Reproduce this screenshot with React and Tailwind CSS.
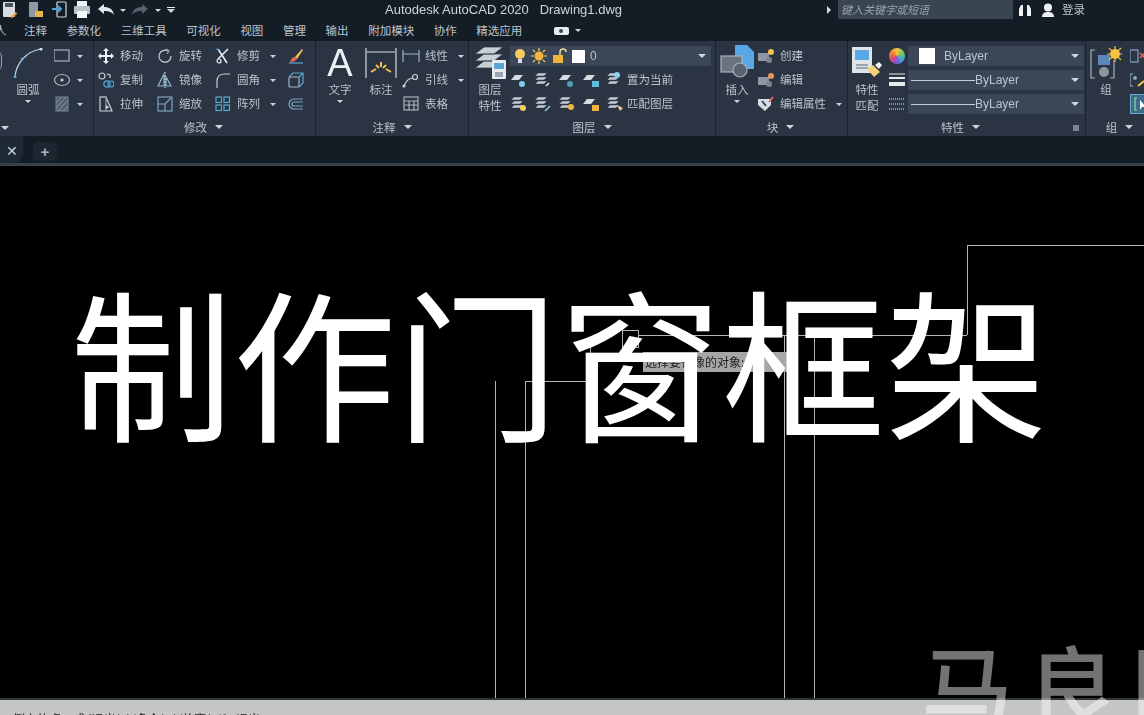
const S = ({ children, w = 16, h = 16, vb }) => (
  <svg width={w} height={h} viewBox={vb || `0 0 ${w} ${h}`} fill="none" stroke="#c9d1d9" strokeWidth="1.2" className="shrink-0">
    {children}
  </svg>
);

const Caret = ({ big, className = '' }) => (
  <span className={`inline-block w-0 h-0 border-x-transparent border-t-[#cfd6dd] ${big ? 'border-x-[4px] border-t-[4px]' : 'border-x-[3px] border-t-[3px]'} ${className}`} />
);

// quick access toolbar
const SaveAs = () => <S w={18} h={18}><rect x="2" y="1" width="12" height="15" rx="1" fill="#d8dde2" stroke="none" /><rect x="4" y="2" width="8" height="4" fill="#4a5562" stroke="none" /><path d="M9 16l6-5 1 2-5 4z" fill="#e8a33c" stroke="none" /></S>;
const OpenFile = () => <S w={18} h={18}><rect x="3" y="1" width="9" height="15" fill="#8f98a3" stroke="none" /><rect x="9" y="10" width="8" height="6" fill="#e9b44c" stroke="none" /></S>;
const Import = () => <S w={18} h={18}><rect x="6" y="1" width="9" height="15" rx="1" stroke="#d5dbe0" /><path d="M1 8h9M7 5l3 3-3 3" stroke="#4fa3dc" strokeWidth="1.8" /></S>;
const PrintI = () => <S w={18} h={18}><rect x="4" y="0" width="10" height="6" fill="#eef1f4" stroke="none" /><rect x="1" y="5" width="16" height="8" rx="1" fill="#b9c2cb" stroke="none" /><rect x="4" y="10" width="10" height="7" fill="#f5f7f9" stroke="none" /></S>;
const Undo = ({ c = '#e4e8ec' }) => <S w={18} h={14}><path d="M1 6l6-5v3c5 0 9 2 10 8-2-3-5-4-10-4v3z" fill={c} stroke="none" /></S>;
const Redo = () => <S w={18} h={14}><path d="M17 6l-6-5v3C6 4 2 6 1 12c2-3 5-4 10-4v3z" fill="#56606c" stroke="none" /></S>;

// modify panel
const Move = () => <S><path d="M8 1v14M1 8h14" strokeWidth="2" stroke="#eef1f4" /><path d="M8 0l3 3H5zM8 16l3-3H5zM0 8l3 3V5zM16 8l-3 3V5z" fill="#eef1f4" stroke="none" /></S>;
const Rotate = () => <S><path d="M11 3a6 6 0 1 0 3 5" /><path d="M9 1l3 2-2 3" stroke="#9aa5b0" /></S>;
const Trim = () => <S><path d="M3 1l9 14M13 1L3 11" strokeWidth="1.5" stroke="#eef1f4" /><circle cx="4" cy="13" r="2" stroke="#eef1f4" /><path d="M1 1l4 1" stroke="#5aa7d6" /></S>;
const Brush = () => <S><path d="M14 1L7 9l2 2 6-9z" fill="#f2c14e" stroke="none" /><path d="M7 9c-3 0-4 2-5 5 3 0 6-1 7-3z" fill="#e4665a" stroke="none" /><path d="M1 15h14" stroke="#5aa7d6" /></S>;
const Copy = () => <S><circle cx="4" cy="4" r="3" /><circle cx="9" cy="12" r="3.2" stroke="#5aa7d6" /><circle cx="13" cy="12" r="3" stroke="#5aa7d6" /><path d="M9 2l3 1v3" /></S>;
const Mirror = () => <S><path d="M7 2L1 14h6zM9 5l5 9H9z" stroke="#8fb6d2" /><path d="M8 0v16" strokeDasharray="2 1" /></S>;
const Fillet = () => <S><path d="M2 16V9c0-5 3-7 8-7h5" /></S>;
const Cube = () => <S><rect x="1" y="5" width="10" height="10" rx="1" stroke="#9fb4c6" /><path d="M1 5l4-4h10v10l-4 4M11 5l4-4" stroke="#5aa7d6" /></S>;
const Stretch = () => <S><path d="M2 1h6l6 14H2z" /><path d="M2 1h6v14" stroke="#9aa5b0" /><circle cx="9" cy="11" r="1" fill="#eef1f4" /></S>;
const Scale = () => <S><rect x="1" y="1" width="14" height="14" stroke="#7fa6c4" /><path d="M1 8h7v7M8 8l6-6" stroke="#7fa6c4" /></S>;
const ArrayI = () => <S><g stroke="#5aa7d6"><rect x="1" y="1" width="5.5" height="5.5" /><rect x="9" y="1" width="5.5" height="5.5" /><rect x="1" y="9" width="5.5" height="5.5" /><rect x="9" y="9" width="5.5" height="5.5" /></g></S>;
const Offset = () => <S><path d="M15 3H6a5 5 0 0 0 0 10h9M15 6H6a2 2 0 0 0 0 4h9" stroke="#7fa6c4" /></S>;

// annotation panel
const Linear = () => <S w={18} h={16}><path d="M1 2v12M17 2v12M1 6h16" stroke="#9fb4c6" /></S>;
const Leader = () => <S w={18} h={16}><path d="M2 14c2-5 5-8 9-8" /><circle cx="13" cy="5" r="2.5" /><circle cx="2" cy="14" r="1" fill="#fff" /></S>;
const Table = () => <S w={18} h={16}><rect x="2" y="1" width="14" height="13" stroke="#aab4be" /><path d="M2 5h14M2 9h14M7 5v9M12 5v9" stroke="#aab4be" /></S>;

// layer panel
const Bulb = ({ c = '#f5cd5b' }) => <S w={14} h={16}><circle cx="7" cy="6" r="5" fill={c} stroke="none" /><rect x="5" y="11" width="4" height="4" fill="#d9dee3" stroke="none" /></S>;
const Sun = () => <S><circle cx="8" cy="8" r="4.5" fill="#f5b53c" stroke="none" /><path d="M8 0v3M8 13v3M0 8h3M13 8h3M2 2l2 2M12 12l2 2M14 2l-2 2M4 12l-2 2" stroke="#f5cd5b" /></S>;
const Lock = ({ c = '#f0b43a' }) => <S><rect x="2" y="7" width="10" height="8" fill={c} stroke="none" /><path d="M9 7V4a3 3 0 0 1 6 0" stroke="#e6d9a8" strokeWidth="1.5" /></S>;
const Sheet = ({ children }) => (
  <S w={18} h={16}>
    <path d="M5 3h8l-4 5H1z" fill="#d5dbe0" stroke="none" />
    {children}
  </S>
);
const Stack = ({ children }) => (
  <S w={18} h={16}>
    <path d="M4 1h9l-3 3H1zM4 5h9l-3 3H1zM4 9h9l-3 3H1z" fill="#c3ccd5" stroke="#2a3442" strokeWidth="0.5" />
    {children}
  </S>
);
const LayerBig = () => (
  <S w={32} h={34}>
    <path d="M10 1h19l-9 7H1zM10 8h19l-9 7H1zM10 15h19l-9 7H1z" fill="#c8cfd6" stroke="#2a3442" strokeWidth="0.7" />
    <rect x="18" y="14" width="14" height="19" rx="1" fill="#e8ecef" stroke="none" />
    <rect x="20" y="17" width="10" height="6" fill="#5aa7d6" stroke="none" />
    <rect x="21" y="26" width="8" height="5" fill="#9aa5b0" stroke="none" />
  </S>
);

// block panel
const InsertBig = () => (
  <S w={34} h={36}>
    <path d="M15 0h12l7 7v17H15z" fill="#5aa7e6" stroke="none" />
    <rect x="1" y="11" width="21" height="16" fill="#6a7480" stroke="#aab4be" />
    <circle cx="20" cy="25" r="7" fill="#59636f" stroke="#aab4be" />
  </S>
);
const BlockI = ({ c = '#f2c14e' }) => <S w={18} h={16}><rect x="1" y="5" width="11" height="8" fill="#8c97a3" stroke="none" /><circle cx="12" cy="12" r="3" fill="#7b8591" stroke="none" /><circle cx="14" cy="4" r="3" fill={c} stroke="none" /></S>;
const Attr = () => <S w={18} h={16}><path d="M1 3h13v6l-6 6-7-6z" fill="#d5dbe0" stroke="none" /><path d="M5 5l4 5" stroke="#2a3442" strokeWidth="1.6" /><path d="M12 6l4-5" stroke="#e4665a" strokeWidth="2" /></S>;

// properties panel
const MatchBig = () => (
  <S w={32} h={32}>
    <rect x="1" y="0" width="20" height="26" fill="#dfe4e8" stroke="none" />
    <rect x="4" y="3" width="14" height="10" fill="#5aa7e6" stroke="none" />
    <path d="M5 18h12M5 21h12" stroke="#5b6672" />
    <path d="M16 22l6-4 7 7-6 5z" fill="#f5d27a" stroke="none" />
    <path d="M24 18l4-3 3 3-3 4z" fill="#eef1f4" stroke="none" />
  </S>
);
const Wheel = () => (
  <span className="w-4 h-4 rounded-full shrink-0 bg-[conic-gradient(#f5c542,#7ec850,#3fa7d6,#7a5bd6,#e0457b,#ef7f2c,#f5c542)]" />
);
const Weights = () => <S><path d="M0 2h16" strokeWidth="1" stroke="#e8ecef" /><path d="M0 6h16" strokeWidth="2" stroke="#e8ecef" /><path d="M0 12h16" strokeWidth="4" stroke="#e8ecef" /></S>;
const Pattern = () => <S><path d="M0 3h16M0 8h16M0 13h16" strokeDasharray="1 1" stroke="#8c97a3" strokeWidth="2" /></S>;

const GroupBig = () => (
  <S w={32} h={34}>
    <path d="M5 4H1v28h4M24 14v18h-4" stroke="#aab4be" />
    <rect x="8" y="9" width="12" height="10" fill="#5a87b8" stroke="none" />
    <circle cx="14" cy="26" r="5" fill="#8c97a3" stroke="none" />
    <circle cx="25" cy="8" r="5" fill="#f5c542" stroke="none" />
    <path d="M25 0v16M17 8h15M19 2l12 12M31 2L19 14" stroke="#f5c542" />
  </S>
);

const Tool = ({ icon, label, caret, capPos = 'ml-[4px]' }) => (
  <div className="flex items-center h-6 gap-[6px]">
    <span className="w-4 flex justify-center">{icon}</span>
    {label && <span className="text-[11.5px] whitespace-nowrap">{label}</span>}
    {caret && <Caret className={capPos} />}
  </div>
);

const Panel = ({ w, title, caret = true, children, extra, titleClass = '' }) => (
  <section className={`${w} shrink-0 border-r border-[#1a232e] flex flex-col relative`}>
    <div className="h-[80px] flex pt-[3px]">{children}</div>
    <div className={`flex-1 flex items-center justify-center gap-2 text-[11.5px] ${titleClass}`}>
      {title}
      {caret && <Caret big />}
    </div>
    {extra}
  </section>
);

const Big = ({ icon, lines, caret, className = '' }) => (
  <div className={`flex flex-col items-center ${className}`}>
    <div className="h-[37px] flex items-center">{icon}</div>
    <div className="text-[11.5px] leading-[16px] text-center">
      {lines.map((l) => <div key={l}>{l}</div>)}
    </div>
    {caret && <Caret className="mt-[3px]" />}
  </div>
);

const Select = ({ children, className = '' }) => (
  <div className={`h-[20px] bg-[#3b4759] flex items-center pr-[5px] ${className}`}>
    {children}
    <Caret big className="ml-auto" />
  </div>
);

const menus = ['注释', '参数化', '三维工具', '可视化', '视图', '管理', '输出', '附加模块', '协作', '精选应用'];

const RibbonIcons = ({ items, label }) => (
  <div className="flex items-center h-6 gap-[4px]">
    {items.map((it, i) => <span key={i} className="w-[18px] mr-[2px] flex justify-center">{it}</span>)}
    <span className="text-[11.5px] -ml-[3px] whitespace-nowrap">{label}</span>
  </div>
);

export default function App() {
  return (
    <div className="w-[1144px] h-[715px] overflow-hidden relative bg-black flex flex-col font-['Noto_Sans_CJK_SC',sans-serif] text-[#bcc4cc]">
      <div className="shrink-0 blur-[0.5px]">
        {/* title bar */}
        <header className="h-[20px] bg-[#141c26] flex items-center relative">
          <div className="flex items-center pl-[1px]">
            <SaveAs />
            <span className="ml-[7px]"><OpenFile /></span>
            <span className="ml-[7px]"><Import /></span>
            <span className="ml-[4px]"><PrintI /></span>
            <span className="ml-[6px]"><Undo /></span>
            <Caret className="ml-[5px]" />
            <span className="ml-[5px]"><Redo /></span>
            <Caret className="ml-[6px]" />
            <div className="ml-[6px] flex flex-col items-center gap-[1px]">
              <span className="w-2 h-[1px] bg-[#e4e8ec]" />
              <Caret big />
            </div>
          </div>
          <div className="ml-[210px] font-['Liberation_Sans',sans-serif] text-[13px] whitespace-pre text-[#cfd4da]">
            Autodesk AutoCAD 2020   Drawing1.dwg
          </div>
          <span className="ml-[205px] w-0 h-0 border-y-[4px] border-y-transparent border-l-[4px] border-l-[#d8dde2]" />
          <div className="ml-[7px] w-[175px] h-[19px] -mt-[1px] bg-[#3a4552] text-[11px] italic text-[#9aa5b0] pl-[3px] flex items-center">
            键入关键字或短语
          </div>
          <div className="ml-[5px] flex items-center">
            <S w={14} h={14}><path d="M1 13V6l2-4h2v11zM13 13V6l-2-4H9v11z" fill="#eef1f4" stroke="none" /></S>
            <span className="ml-[9px]">
              <S w={14} h={14}><circle cx="7" cy="4.5" r="4" fill="#eef1f4" stroke="none" /><path d="M1 14c0-4 3-5 6-5s6 1 6 5z" fill="#eef1f4" stroke="none" /></S>
            </span>
            <span className="ml-[7px] text-[11.5px]">登录</span>
          </div>
        </header>
        {/* menu tabs */}
        <nav className="h-[21px] bg-[#141c26] flex items-center pl-[24px] gap-[19.6px] text-[11.5px] relative">
          <span className="absolute left-[-5px] top-[2px]">人</span>
          {menus.map((m) => <span key={m} className="whitespace-nowrap">{m}</span>)}
          <span className="ml-[12px] flex items-center gap-[6px]">
            <span className="w-[15px] h-[8px] rounded-[2px] bg-[#e8ecef] flex items-center justify-center">
              <span className="w-[4px] h-[4px] rounded-full bg-[#3a4552]" />
            </span>
            <Caret />
          </span>
        </nav>
        {/* ribbon */}
        <div className="h-[95px] bg-[#2a3442] flex">
          <Panel w="w-[94px]" title={null} extra={<Caret big className="absolute left-[1px] bottom-[6px]" />} caret={false}>
            <span className="absolute left-[-12px] top-[9px] w-[14px] h-[22px] rounded-full border border-[#9aa5b0]" />
            <Big className="ml-[13px] w-[30px]" lines={['圆弧']} caret icon={
              <S w={30} h={30}><path d="M2 29C3 15 14 3 28 1" stroke="#b9d0e2" /><circle cx="2" cy="29" r="1.5" fill="#5aa7d6" stroke="none" /><circle cx="28" cy="1" r="1.5" fill="#dfe4e8" stroke="none" /><circle cx="9" cy="11" r="1.5" fill="#5aa7d6" stroke="none" /></S>
            } />
            <div className="ml-[11px] flex flex-col">
              <Tool icon={<S><rect x="0" y="2" width="15" height="11" stroke="#aab4be" /></S>} caret capPos="ml-[1px]" />
              <Tool icon={<S><ellipse cx="8" cy="8" rx="7.5" ry="5.5" stroke="#aab4be" /><circle cx="8" cy="8" r="1" fill="#aab4be" /></S>} caret capPos="ml-[1px]" />
              <Tool icon={<S><rect x="2" y="1" width="12" height="14" fill="#56606c" stroke="#6f7b88" /><path d="M2 7l6-6M2 12l10-11M4 15l10-11M9 15l5-5" stroke="#7fa6c4" strokeWidth="0.8" /></S>} caret capPos="ml-[1px]" />
            </div>
          </Panel>

          <Panel w="w-[222px]" title="修改" titleClass="pr-[2px]">
            <div className="ml-[4px] w-[59px]">
              <Tool icon={<Move />} label="移动" />
              <Tool icon={<Copy />} label="复制" />
              <Tool icon={<Stretch />} label="拉伸" />
            </div>
            <div className="w-[58px]">
              <Tool icon={<Rotate />} label="旋转" />
              <Tool icon={<Mirror />} label="镜像" />
              <Tool icon={<Scale />} label="缩放" />
            </div>
            <div className="w-[73px]">
              <Tool icon={<Trim />} label="修剪" caret />
              <Tool icon={<Fillet />} label="圆角" caret />
              <Tool icon={<ArrayI />} label="阵列" caret />
            </div>
            <div>
              <Tool icon={<Brush />} />
              <Tool icon={<Cube />} />
              <Tool icon={<Offset />} />
            </div>
          </Panel>

          <Panel w="w-[153px]" title="注释">
            <Big className="ml-[12px] w-[24px]" lines={['文字']} caret icon={
              <span className="font-['Liberation_Sans',sans-serif] text-[38px] leading-none text-[#eef1f4]">A</span>
            } />
            <Big className="ml-[13px] w-[32px]" lines={['标注']} icon={
              <S w={32} h={32}><path d="M1 1v30M31 1v30M2 5h28" stroke="#d5dbe0" /><path d="M6 25l5-3M11 18l3 3M16 15v5M21 18l-3 3M26 25l-5-3" stroke="#f2c14e" strokeWidth="2" /></S>
            } />
            <div className="ml-[6px]">
              <Tool icon={<Linear />} label="线性" caret />
              <Tool icon={<Leader />} label="引线" caret />
              <Tool icon={<Table />} label="表格" />
            </div>
          </Panel>

          <Panel w="w-[247px]" title="图层">
            <Big className="ml-[5px] w-[32px]" lines={['图层', '特性']} icon={<LayerBig />} />
            <div className="ml-[4px] flex flex-col">
              <Select className="w-[201px] mt-[2px] mb-[2px] pl-[3px] gap-[4px]">
                <Bulb /><Sun /><Lock />
                <span className="w-[13px] h-[13px] bg-white ml-[1px]" />
                <span className="ml-[1px] text-[12px] font-['Liberation_Sans',sans-serif]">0</span>
              </Select>
              <RibbonIcons label="置为当前" items={[
                <Sheet key="a"><circle cx="12" cy="12" r="3" fill="#7fd0e8" stroke="none" /></Sheet>,
                <Stack key="b"><path d="M12 14l3-3" stroke="#fff" /></Stack>,
                <Sheet key="c"><circle cx="12" cy="12" r="3" fill="#4d9db5" stroke="none" /></Sheet>,
                <Sheet key="d"><rect x="10" y="9" width="7" height="6" fill="#5ac0de" stroke="none" /></Sheet>,
                <Stack key="e"><circle cx="11" cy="3" r="3" fill="#8fd0ec" stroke="none" /></Stack>,
              ]} />
              <RibbonIcons label="匹配图层" items={[
                <Stack key="a"><circle cx="13" cy="12" r="3" fill="#f5cd5b" stroke="none" /></Stack>,
                <Stack key="b"><path d="M11 15l5-5" stroke="#9ed0ec" strokeWidth="1.5" /></Stack>,
                <Stack key="c"><circle cx="13" cy="11" r="3" fill="#f5b53c" stroke="none" /></Stack>,
                <Sheet key="d"><rect x="10" y="9" width="7" height="6" fill="#f0b43a" stroke="none" /></Sheet>,
                <Stack key="e"><path d="M11 9l6 3-3 3z" fill="#e8cf94" stroke="none" /></Stack>,
              ]} />
            </div>
          </Panel>

          <Panel w="w-[132px]" title="块" titleClass="pr-[2px]">
            <Big className="ml-[4px] w-[34px]" lines={['插入']} caret icon={<InsertBig />} />
            <div className="ml-[4px]">
              <Tool icon={<BlockI />} label="创建" />
              <Tool icon={<BlockI c="#e8965a" />} label="编辑" />
              <Tool icon={<Attr />} label="编辑属性" caret />
            </div>
          </Panel>

          <Panel w="w-[238px]" title="特性" titleClass="pr-[12px]" extra={
            <span className="absolute right-[6px] bottom-[5px] w-[6px] h-[6px] bg-[#7b8591]" />
          }>
            <Big className="ml-[4px] w-[30px]" lines={['特性', '匹配']} icon={<MatchBig />} />
            <div className="ml-[6px] flex flex-col pl-[1px]">
              <span className="h-6 flex items-center"><Wheel /></span>
              <span className="h-6 flex items-center"><Weights /></span>
              <span className="h-6 flex items-center"><Pattern /></span>
            </div>
            <div className="ml-[3px] flex flex-col gap-[4px] mt-[2px] text-[12px] font-['Liberation_Sans',sans-serif]">
              <Select className="w-[176px] pl-[11px]">
                <span className="w-[16px] h-[16px] bg-white" />
                <span className="ml-[9px]">ByLayer</span>
              </Select>
              <Select className="w-[176px] pl-[3px]">
                <span className="w-[64px] h-[1px] bg-[#c7ced6]" />
                <span>ByLayer</span>
              </Select>
              <Select className="w-[176px] pl-[3px]">
                <span className="w-[64px] h-[1px] bg-[#c7ced6]" />
                <span>ByLayer</span>
              </Select>
            </div>
          </Panel>

          <Panel w="flex-1" title="组" titleClass="pl-[4px]">
            <Big className="ml-[4px] w-[32px]" lines={['组']} icon={<GroupBig />} />
            <div className="ml-[8px]">
              <Tool icon={<S><rect x="0" y="2" width="8" height="12" stroke="#7fa6c4" /><path d="M10 5l5 5M15 5l-5 5" stroke="#e4665a" strokeWidth="1.5" /></S>} />
              <Tool icon={<S><path d="M3 2H0v12h3" stroke="#aab4be" /><circle cx="5" cy="6" r="2" fill="#7fa6c4" stroke="none" /><path d="M8 14l6-5" stroke="#f2c14e" strokeWidth="2" /></S>} />
              <div className="h-6 flex items-center">
                <span className="w-[19px] h-[20px] bg-[#3f6a8c] border border-[#6ea6cf] flex items-center justify-center">
                  <S w={12} h={14}><path d="M3 1H1v12h2" stroke="#8fe0a8" /><path d="M6 3l6 7H8l-2 3z" fill="#fff" stroke="none" /></S>
                </span>
              </div>
            </div>
          </Panel>
        </div>
        {/* file tabs */}
        <div className="h-[27px] bg-[#141c26] flex items-center">
          <div className="w-[23px] h-[27px] pt-[4px] bg-[#1f2935] rounded-br-[10px] flex items-center justify-center text-[14px] text-[#c9d1d9] font-['Liberation_Sans',sans-serif]">
            ✕
          </div>
          <div className="ml-[10px] mt-[4px] w-[24px] h-[19px] bg-[#1c2530] rounded-[5px] flex items-center justify-center text-[15px] font-bold leading-none text-[#aab4be] font-['Liberation_Sans',sans-serif]">
            +
          </div>
        </div>
        <div className="h-[3px] bg-[#39414b]" />
      </div>

      {/* drawing area, the lines are the drawing itself */}
      <main className="flex-1 relative">
        <svg width="1144" height="532" className="absolute left-0 top-0" stroke="#b4b4b4" fill="none" shapeRendering="crispEdges">
          <path d="M967 169V79H1144" />
          <path d="M495 215V532M525 215V532M525 215H590V177M784 170V532M814 170V532" />
          <path d="M638 169H967M622 164h16v17h-16z" />
        </svg>
        <div className="absolute left-[643px] top-[186px] w-[154px] h-[20px] bg-[#a6a6a6] text-[#222] text-[12px] leading-[20px] pl-[2px] blur-[0.4px]">
          选择要镜像的对象:
        </div>
        <h1 className="absolute left-[70px] top-[97px] m-0 text-[163px] leading-[190px] font-normal text-white whitespace-nowrap">
          制作门窗框架
        </h1>
        <div className="absolute left-[921px] top-[458px] text-[92px] leading-[120px] tracking-[13px] font-medium text-white/45 whitespace-nowrap z-10">
          马良国
        </div>
      </main>

      {/* command line */}
      <footer className="h-[17px] shrink-0 relative">
        <div className="h-[2px] bg-[#2f353b]" />
        <div className="h-[15px] bg-[#c4c6c6] text-[#1b1b1b] text-[12px] leading-[18px] pl-[13px] pt-[10px] whitespace-nowrap blur-[0.3px]">
          侧上的点，或 [退出(E)/多个(M)/放弃(U)] &lt;退出&gt;:
        </div>
      </footer>
    </div>
  );
}
